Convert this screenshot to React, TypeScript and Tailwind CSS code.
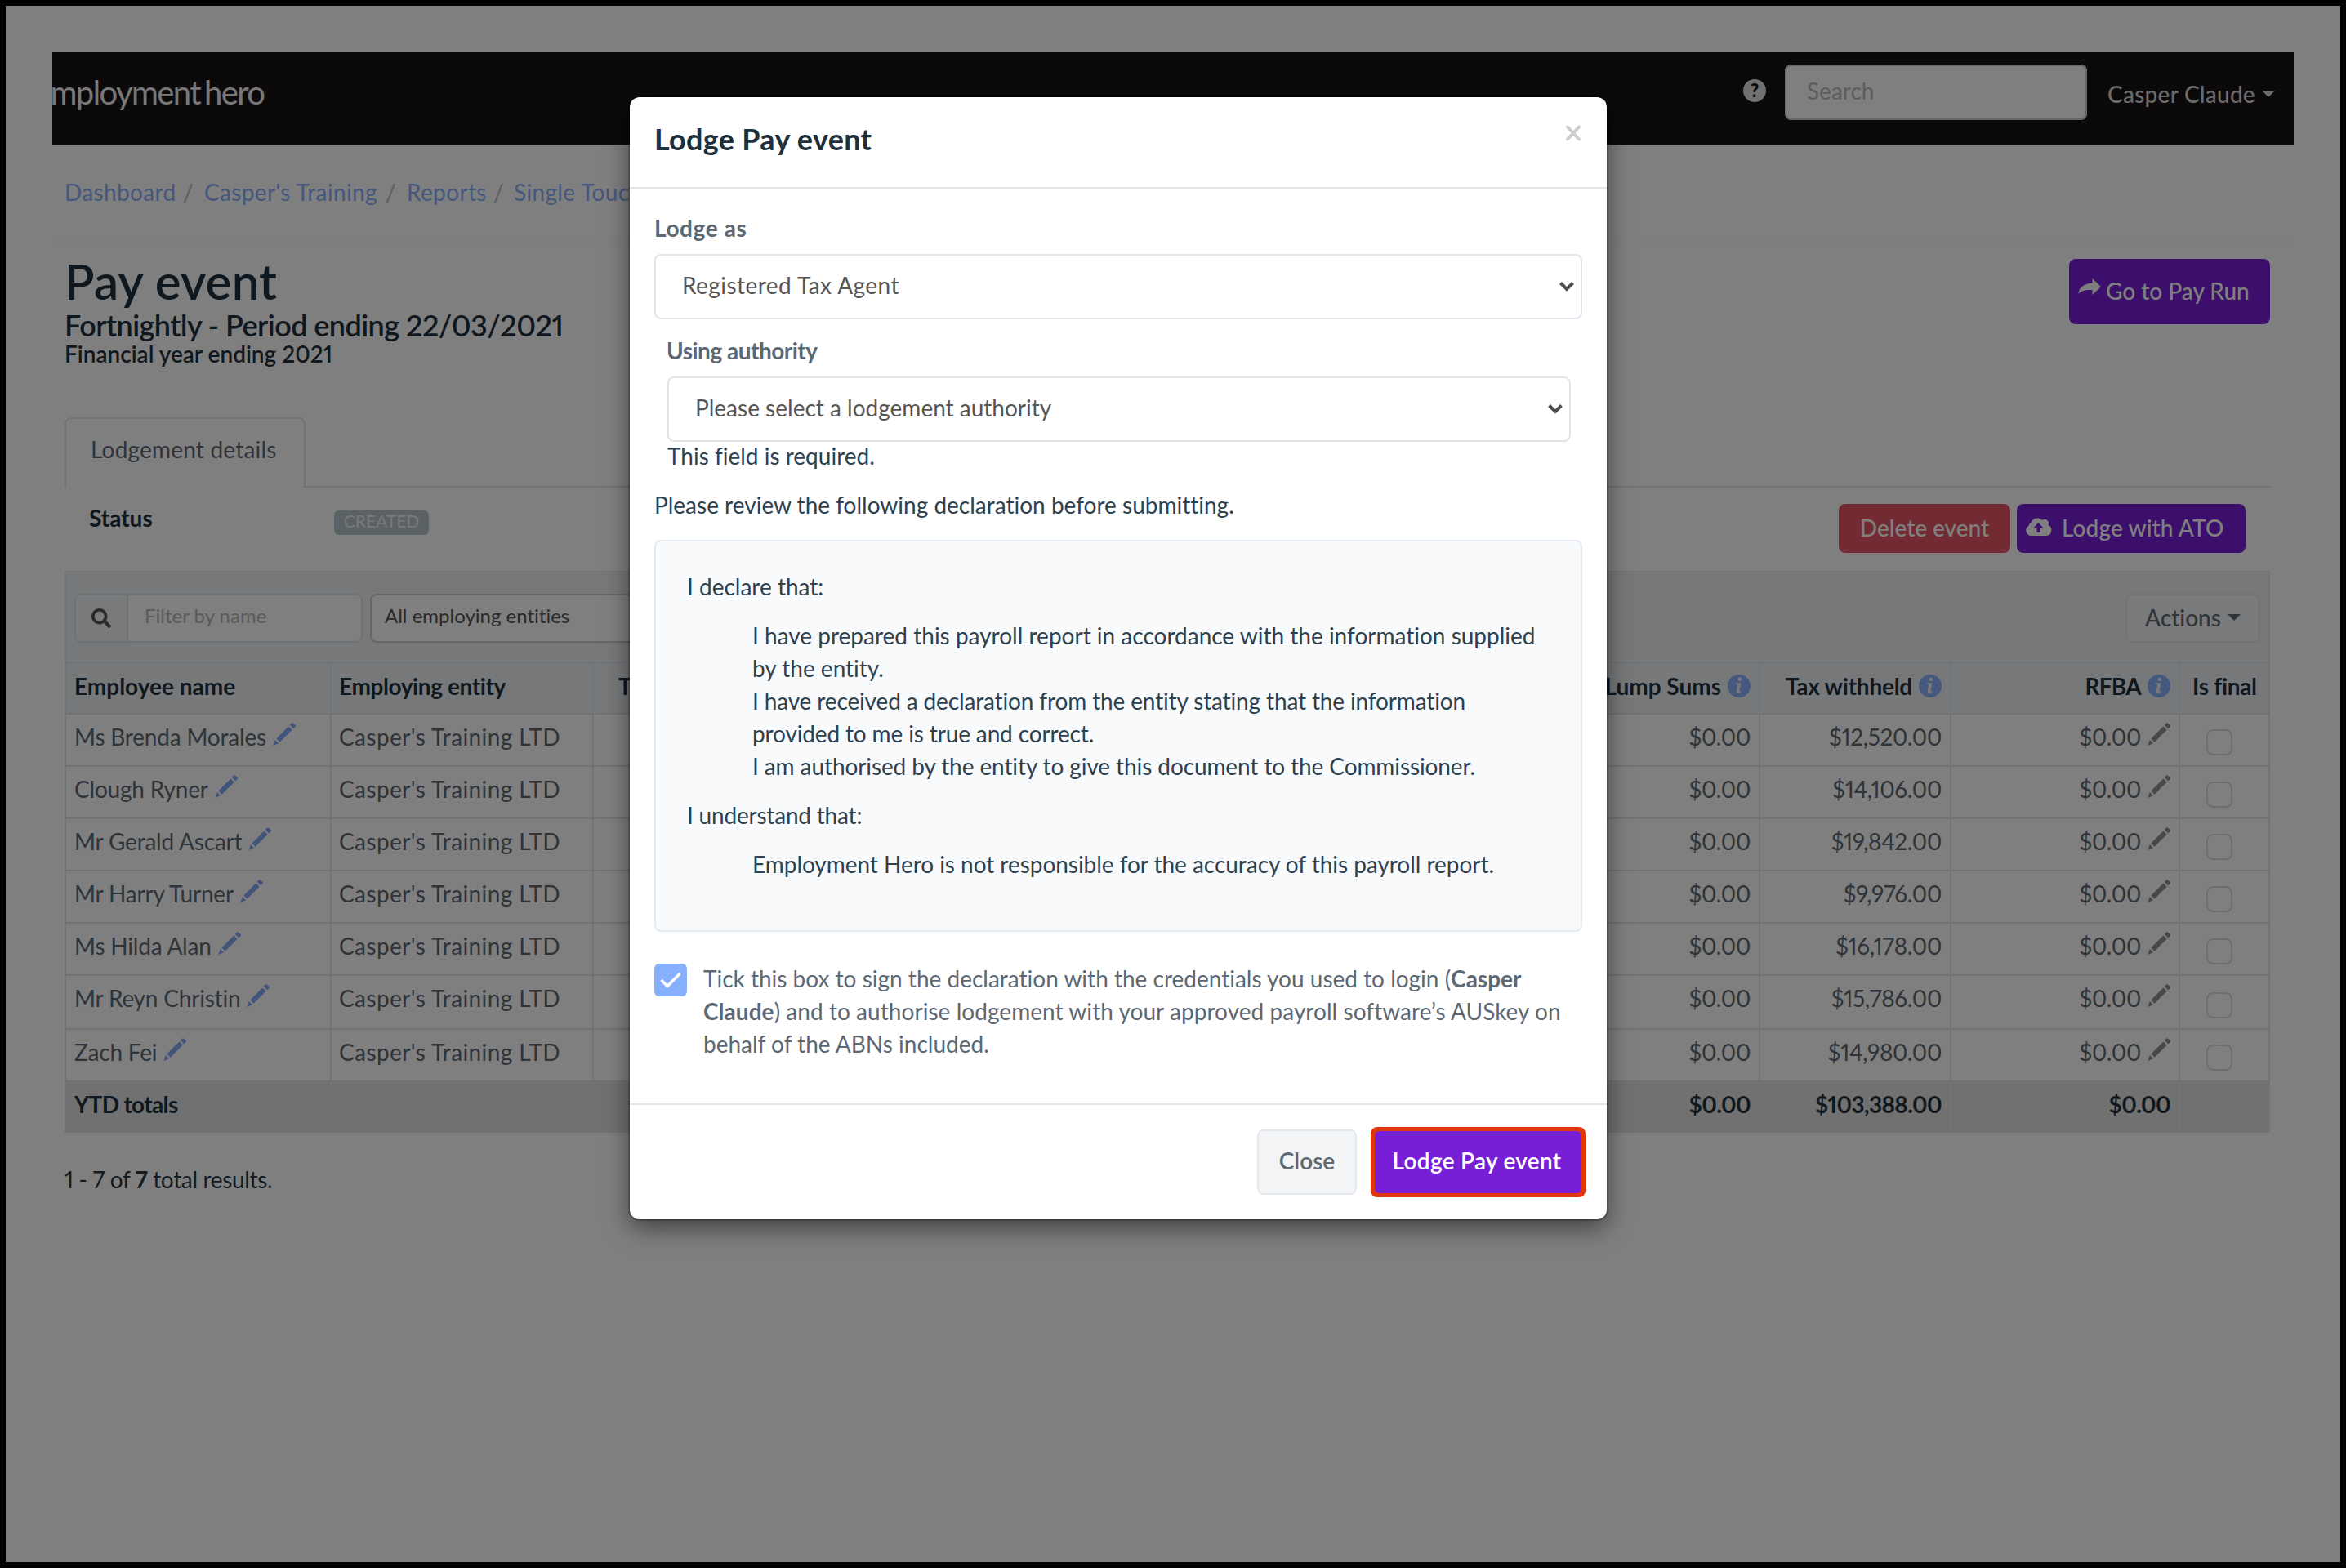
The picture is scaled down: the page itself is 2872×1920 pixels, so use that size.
import type { ReactNode } from "react";
import { FaSearch } from "react-icons/fa";

type Employee = {
  name: string;
  tax: string;
};

const employees: Employee[] = [
  { name: "Ms Brenda Morales", tax: "$12,520.00" },
  { name: "Clough Ryner", tax: "$14,106.00" },
  { name: "Mr Gerald Ascart", tax: "$19,842.00" },
  { name: "Mr Harry Turner", tax: "$9,976.00" },
  { name: "Ms Hilda Alan", tax: "$16,178.00" },
  { name: "Mr Reyn Christin", tax: "$15,786.00" },
  { name: "Zach Fei", tax: "$14,980.00" },
];

const gridCols =
  "grid grid-cols-[325px_321px_373px_800px_255px_234px_280px_110px] border-b-2 border-[#dfe6eb]";
const cell = "flex items-start border-r-2 border-[#e2e8ec] whitespace-nowrap";

function Pencil({ className }: { className: string }) {
  return (
    <svg viewBox="0 0 28 28" className={className} fill="currentColor">
      <path d="M22.6.9a2 2 0 0 1 2.9 0l1.700 1.700a2 2 0 0 1 0 2.900l-1.900 1.900-4.600-4.600z" />
      <path d="M19.400 4.500 23.700 8.800 8.600 23.800l-4.200-4.300z" />
      <path d="M2.800 21 7 25.200.3 28z" />
    </svg>
  );
}

function ShareArrow() {
  return (
    <svg viewBox="0 0 28 20" className="mr-1.5 -mt-2.5 h-5 w-7" fill="currentColor">
      <path d="M17.500 0 28 10 17.500 20v-6C10 13.600 4.500 14.500.3 18.800 1 11 7.500 5.900 17.500 5.700z" />
    </svg>
  );
}

function InfoIcon() {
  return (
    <svg viewBox="0 0 28 28" className="mt-[6px] ml-2 h-7 w-7 shrink-0 text-[#8ab0fc]">
      <circle cx="14" cy="14" r="14" fill="currentColor" />
      <circle cx="14.800" cy="5.800" r="2.400" fill="#eff1f4" />
      <path
        d="M10.200 10.200h6.200l-1.700 9.300q-.3 1.700 1.800 1.100l-.3 1.800q-5.900 2.400-5.600-1.200l1.400-8.300q.2-1.200-2-1.200z"
        fill="#eff1f4"
      />
    </svg>
  );
}

function CloudUpload() {
  return (
    <svg viewBox="0 0 32 24" className="-mt-0.5 h-6 w-8" fill="none">
      <path
        d="M7 23a6.500 6.500 0 0 1-3.300-12.200A4.800 4.800 0 0 1 6.500 6.500 8.500 8.500 0 0 1 20.500 4 4.600 4.600 0 0 1 27.300 10 6.800 6.800 0 0 1 25 23z"
        fill="#fff"
      />
      <path d="m15.500 7 6 6.500h-4V19h-4v-5.500h-4z" fill="#771fd6" />
    </svg>
  );
}

function Caret({ className }: { className: string }) {
  return (
    <svg viewBox="0 0 16 8" className={className} fill="currentColor">
      <path d="M0 0h16L8 8z" />
    </svg>
  );
}

function SelectBox({ children }: { children: ReactNode }) {
  return (
    <div className="flex h-20 items-center justify-between rounded-lg border-2 border-[#dfe5ea] bg-white pr-[7px] pl-8 text-[#555]">
      <span className="-mt-1">{children}</span>
      <svg viewBox="0 0 20 14" className="h-3.5 w-5" fill="none">
        <path d="m2.500 2.500 7.500 7.500 7.500-7.500" stroke="#4d4d4d" strokeWidth="4" />
      </svg>
    </div>
  );
}

function NavBar() {
  return (
    <header className="mx-[57px] mt-[57px] flex h-[113px] items-start overflow-hidden bg-[#161214] text-[#f0f0f0]">
      <div className="-ml-[22px] pt-[24px] text-[40px] leading-[50px] tracking-[-1.6px] text-[#f0f0f0]">
        employment<span className="ml-[5px]">hero</span>
      </div>
      <div className="ml-auto flex items-start">
        <div className="mt-[33px] flex h-7 w-7 items-center justify-center rounded-full bg-[#e0e0e0] text-[22px] leading-7 font-black text-[#161214]">
          ?
        </div>
        <div className="mt-[15px] ml-[23px] h-[68px] w-[370px] rounded-lg bg-white pt-3 pl-[27px] text-[28px] leading-10 text-[#bbb] shadow-[inset_0_0_0_2px_#ccc]">
          Search
        </div>
        <div className="mt-[31px] ml-[25px] flex w-[228px] items-center text-[28px] leading-10 font-medium tracking-[0.25px] text-[#d6d6d6]">
          Casper Claude
          <Caret className="ml-2 h-2 w-4" />
        </div>
      </div>
    </header>
  );
}

function Breadcrumbs() {
  return (
    <nav className="mx-[57px] flex h-[120px] border-b-2 border-[#f6f9f8] pt-[38px] pl-[15px] text-[28px] leading-10 tracking-[0.35px] whitespace-nowrap text-[#8aaef8]">
      <span className="w-[145px]">Dashboard</span>
      <span className="w-[26px] text-[#bbb]">/</span>
      <span className="w-[222px]">Casper's Training</span>
      <span className="w-[26px] text-[#bbb]">/</span>
      <span className="w-[106px]">Reports</span>
      <span className="w-[25px] text-[#bbb]">/</span>
      <span>Single Touch Payroll</span>
    </nav>
  );
}

function Toolbar() {
  return (
    <div className="flex h-[113px] items-start border-2 border-[#e2e8ec] bg-[#eef1f5] pt-[26px] pr-2.5 pl-2.5">
      <div className="flex h-[60px] w-[353px] overflow-hidden rounded-lg border-2 border-[#dde3e6] bg-white">
        <div className="flex w-[64px] items-center justify-center border-r-2 border-[#d9e0e0] bg-[#f1f4f7]">
          <FaSearch className="h-6 w-6 text-[#555]" />
        </div>
        <span className="pt-[5px] pl-5 text-[24px] leading-10 text-[#b5b5b5]">Filter by name</span>
      </div>
      <div className="ml-[9px] h-[60px] w-[460px] rounded-lg border-2 border-[#ccc] bg-white pt-[5px] pl-4 text-[24px] leading-10 text-[#555]">
        All employing entities
      </div>
      <button className="ml-auto flex h-[60px] w-[165px] items-center justify-center rounded-lg border-2 border-[#e3e6e9] bg-[#f2f4f6] pb-0.5 text-[28px] leading-10 font-medium text-[#5c6873]">
        Actions
        <Caret className="ml-2 h-2 w-4" />
      </button>
    </div>
  );
}

function PayTable() {
  return (
    <div className="mr-[86px] ml-[72px] mt-[21px] text-[28px] leading-10">
      <Toolbar />
      <div className="border-l-2 border-[#dfe6eb]">
        <div className={`${gridCols} h-[63px] bg-[#eff1f4] font-bold text-[#1f303d]`}>
          <div className={`${cell} pt-2 pl-2.5`}>Employee name</div>
          <div className={`${cell} pt-2 pl-[9px] tracking-[-0.4px]`}>Employing entity</div>
          <div className={`${cell} pt-2 pl-[30px]`}>Total gross payments</div>
          <div className={cell} />
          <div className={`${cell} justify-end pt-2 pr-2.5`}>
            Lump Sums
            <InfoIcon />
          </div>
          <div className={`${cell} justify-end pt-2 pr-2.5 tracking-[-0.25px]`}>
            Tax withheld
            <InfoIcon />
          </div>
          <div className={`${cell} justify-end pt-2 pr-2.5 tracking-[-0.7px]`}>
            RFBA
            <InfoIcon />
          </div>
          <div className={`${cell} pt-2 pl-[15px] tracking-[-0.3px]`}>Is final</div>
        </div>
        {employees.map((employee, index) => (
          <div
            key={employee.name}
            className={`${gridCols} ${index === 5 ? "h-[66px]" : "h-16"} text-[#5c6873]`}
          >
            <div className={`${cell} pt-[7px] pl-2.5 tracking-[-0.2px]`}>
              {employee.name}
              <Pencil className="mt-[3px] ml-2 h-7 w-7 text-[#86a9f6]" />
            </div>
            <div className={`${cell} pt-[7px] pl-[9px] tracking-[0.4px]`}>Casper's Training LTD</div>
            <div className={cell} />
            <div className={cell} />
            <div className={`${cell} justify-end pt-[7px] pr-2.5 tracking-[-0.35px]`}>$0.00</div>
            <div className={`${cell} justify-end pt-[7px] pr-2.5 tracking-[-0.35px]`}>
              {employee.tax}
            </div>
            <div className={`${cell} justify-end pt-[7px] pr-2.5 tracking-[-0.35px]`}>
              $0.00
              <Pencil className="mt-[3px] ml-2 h-7 w-7 text-[#8b9297]" />
            </div>
            <div className={`${cell} ${index === 5 ? "pt-5" : "pt-[18px]"} pl-8`}>
              <div className="h-8 w-8 rounded-lg border-2 border-[#dcdcdc]" />
            </div>
          </div>
        ))}
        <div className={`${gridCols} h-[62px] bg-[#e2e2e2] font-bold tracking-[-0.65px] text-[#1f303d]`}>
          <div className={`${cell} pt-[7px] pl-2.5`}>YTD totals</div>
          <div className={cell} />
          <div className={cell} />
          <div className={cell} />
          <div className={`${cell} justify-end pt-[7px] pr-2.5`}>$0.00</div>
          <div className={`${cell} justify-end pt-[7px] pr-2.5`}>$103,388.00</div>
          <div className={`${cell} justify-end pt-[7px] pr-2.5`}>$0.00</div>
          <div className={cell} />
        </div>
      </div>
      <p className="mt-[37px] tracking-[-0.35px] text-[#263845]">
        1 - 7 of <b>7</b> total results.
      </p>
    </div>
  );
}

function PayEventPage() {
  return (
    <div className="h-full overflow-hidden bg-white">
      <NavBar />
      <Breadcrumbs />
      <div className="mr-[86px] ml-[72px] flex h-[214px] items-start justify-between pt-5 text-[#1f303d]">
        <div className="-mt-[6px] whitespace-nowrap">
          <h1 className="text-[60px] leading-[66px] font-semibold tracking-[0.2px]">Pay event</h1>
          <h2 className="text-[36px] leading-[42px] font-semibold tracking-[-0.56px]">
            Fortnightly - Period ending 22/03/2021
          </h2>
          <h3 className="-mt-px text-[28px] leading-[30px] font-semibold">
            Financial year ending 2021
          </h3>
        </div>
        <button className="flex h-20 w-[246px] items-center rounded-lg bg-[#771fd6] pb-0.5 pl-[11px] text-[28px] font-medium text-white">
          <ShareArrow />
          Go to Pay Run
        </button>
      </div>
      <div className="mr-[86px] ml-[72px] flex h-[86px] text-[28px] leading-10 text-[#5c6873]">
        <div className="w-[295px] rounded-t-lg border-2 border-b-0 border-[#e2e8ec] pt-[17px] pl-[30px] tracking-[0.2px]">
          Lodgement details
        </div>
        <div className="grow border-b-2 border-[#dfe6eb]" />
      </div>
      <div className="mr-[86px] ml-[72px] flex h-[81px] items-start pt-5 pl-[30px] text-[28px] leading-10">
        <b className="-mt-[3px] w-[300px] text-[#1f303d]">Status</b>
        <span className="mt-2 h-[30px] w-[116px] rounded-md bg-[#b7c4ca] text-center text-[21px] leading-[25px] text-[#eef1f4]">
          CREATED
        </span>
        <button className="ml-auto h-[60px] w-[210px] rounded-lg bg-[#e45566] pb-0.5 font-medium text-white">
          Delete event
        </button>
        <button className="mr-[30px] ml-2 flex h-[60px] w-[280px] items-center rounded-lg bg-[#771fd6] pb-0.5 pl-[11px] font-medium tracking-[0.1px] text-white">
          <CloudUpload />
          <span className="ml-3">Lodge with ATO</span>
        </button>
      </div>
      <PayTable />
    </div>
  );
}

function LodgeModal() {
  return (
    <section className="absolute top-[112px] left-[764px] h-[1374px] w-[1196px] rounded-xl bg-white text-[28px] leading-10 text-[#2e414f] shadow-[0_10px_30px_rgba(0,0,0,0.5),0_0_0_2px_rgba(0,0,0,0.2)]">
      <div className="flex h-[112px] justify-between border-b-2 border-[#e5e5e5] pt-[26px] pr-[31px] pl-[30px]">
        <h4 className="text-[36px] leading-[50px] font-bold tracking-[0.3px] text-[#1f303d]">
          Lodge Pay event
        </h4>
        <svg viewBox="0 0 20 20" className="mt-[8px] h-5 w-5" fill="none">
          <path d="m3 2.500 14 15m0-15-14 15" stroke="#ccc" strokeWidth="4" strokeLinecap="round" />
        </svg>
      </div>

      <div className="flex h-[1122px] flex-col border-b-2 border-[#e5e5e5] px-[30px] pt-7">
        <div className="h-[52px] font-bold tracking-[0.6px] text-[#5c6873]">Lodge as</div>
        <SelectBox>
          <span className="tracking-[0.45px]">Registered Tax Agent</span>
        </SelectBox>
        <div className="pt-[18px] pr-3.5 pl-4">
          <div className="-ml-px h-[52px] font-bold tracking-[-0.5px] text-[#5c6873]">
            Using authority
          </div>
          <SelectBox>Please select a lodgement authority</SelectBox>
          <p className="-mt-[3px]">This field is required.</p>
        </div>
        <p className="mt-5">Please review the following declaration before submitting.</p>
        <div className="mt-[23px] h-[480px] rounded-lg border-2 border-[#e3eaf2] bg-[#f9fafc] px-[38px] pt-[35px] whitespace-nowrap">
          <p>I declare that:</p>
          <ul className="my-5 pl-20">
            <li>
              I have prepared this payroll report in accordance with the information supplied
              <br />
              by the entity.
            </li>
            <li className="tracking-[-0.14px]">
              I have received a declaration from the entity stating that the information
              <br />
              provided to me is true and correct.
            </li>
            <li className="tracking-[-0.1px]">
              I am authorised by the entity to give this document to the Commissioner.
            </li>
          </ul>
          <p className="tracking-[-0.2px]">I understand that:</p>
          <ul className="mt-5 pl-20">
            <li className="tracking-[-0.04px]">
              Employment Hero is not responsible for the accuracy of this payroll report.
            </li>
          </ul>
        </div>
        <div className="mt-[39px] flex whitespace-nowrap text-[#5c6873]">
          <div className="mr-5 flex h-10 w-10 items-center justify-center rounded-md bg-[#86b0ff]">
            <svg viewBox="0 0 28 22" className="h-[22px] w-7" fill="none">
              <path d="m2.500 11 7.500 7.500L25.500 3" stroke="#fff" strokeWidth="3.500" />
            </svg>
          </div>
          <p className="-mt-[2px]">
            Tick this box to sign the declaration with the credentials you used to login (<b>Casper</b>
            <br />
            <span className="tracking-[0.05px]">
              <b>Claude</b>) and to authorise lodgement with your approved payroll software’s AUSkey on
            </span>
            <br />
            behalf of the ABNs included.
          </p>
        </div>
      </div>

      <div className="flex items-start justify-end pt-[27px] pr-[26px]">
        <button className="mt-[3px] h-20 w-[122px] rounded-lg border-2 border-[#e3e8ed] bg-[#f3f4f6] pb-1 font-semibold text-[#5c6873]">
          Close
        </button>
        <div className="ml-[17px] h-[86px] w-[263px] rounded-lg bg-[#e0360a] p-[5px]">
          <button className="h-full w-full rounded-md bg-[#771fd6] pr-[3px] pb-1 font-semibold tracking-[0.3px] text-white">
            Lodge Pay event
          </button>
        </div>
      </div>
    </section>
  );
}

export default function App() {
  return (
    <div className="h-[1920px] w-[2872px] overflow-hidden border-7 border-black font-[Lato,sans-serif] proportional-nums [font-variant-ligatures:none]">
      <div className="relative h-full">
        <PayEventPage />
        <div className="absolute inset-0 bg-black/50" />
        <LodgeModal />
      </div>
    </div>
  );
}
